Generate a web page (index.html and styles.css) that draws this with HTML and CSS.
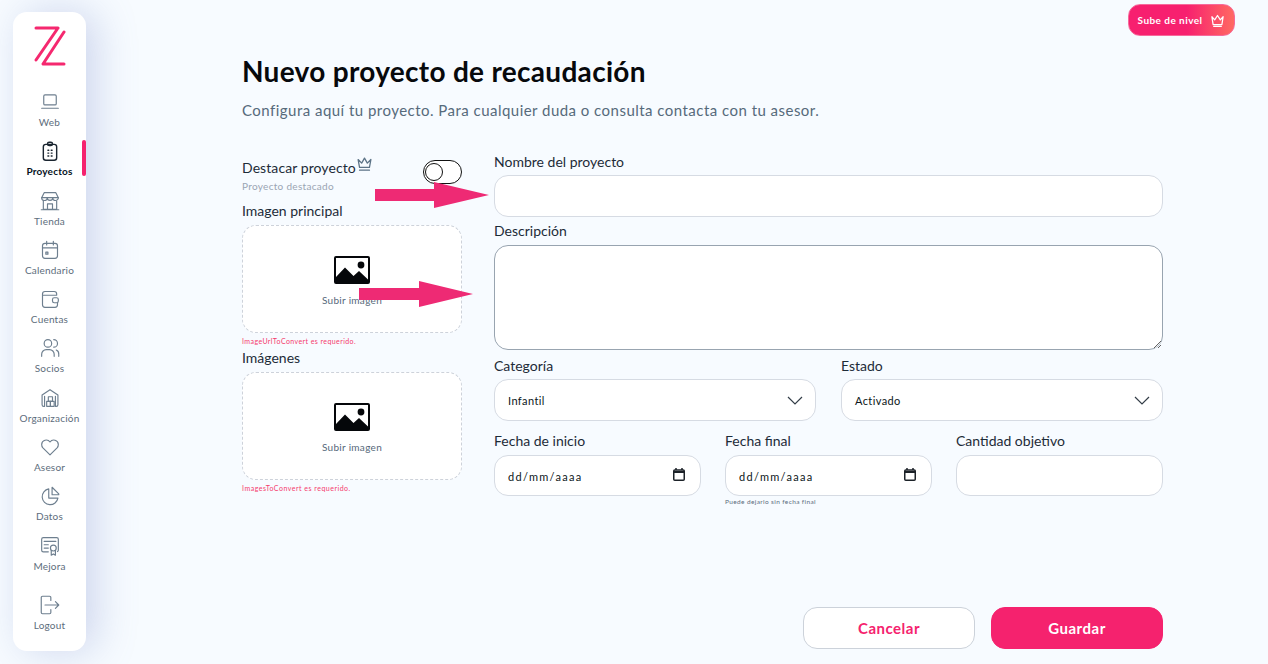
FILE: index.html
```html
<!DOCTYPE html>
<html lang="es">
<head>
<meta charset="utf-8">
<title>Nuevo proyecto de recaudación</title>
<link rel="stylesheet" href="styles.css">
</head>
<body>
<div class="page">
  <aside class="sidebar">
    <svg class="logo" viewBox="0 0 32 42" fill="none" stroke="#f5286f" stroke-width="3" stroke-linecap="round" stroke-linejoin="round"><path d="M2 2H24M24 2 2 34M30 6 9 38H30"/></svg>
    <nav class="nav">
      <a class="nav-item"><svg viewBox="0 0 24 24" class="ico"><rect x="4.5" y="3.5" width="15" height="12" rx="1.5"/><path d="M2 19.5H22"/></svg><span>Web</span></a>
      <a class="nav-item active"><svg viewBox="0 0 24 24" class="ico"><rect x="4" y="4" width="16" height="19" rx="3"/><rect x="9" y="1.5" width="6" height="4" rx="2"/><path d="M9.500 11h1M13.500 11h1M9.500 14.500h1M13.500 14.500h1M9.500 18h1M13.500 18h1"/></svg><span>Proyectos</span></a>
      <a class="nav-item"><svg viewBox="0 0 24 24" class="ico"><path d="M5 2h14l3 6H2z"/><path d="M2 8a3.300 3.300 0 0 0 6.700 0 3.300 3.300 0 0 0 6.600 0A3.300 3.300 0 0 0 22 8"/><path d="M4 12V22H20V12M9 22V15.500H15V22M1.500 22.500H22.500"/></svg><span>Tienda</span></a>
      <a class="nav-item"><svg viewBox="0 0 24 24" class="ico"><rect x="3" y="4" width="18" height="18" rx="3"/><path d="M3 9.500H21M8 1.500V6M16 1.500V6M7 14.500h2.500v2.500H7z"/></svg><span>Calendario</span></a>
      <a class="nav-item"><svg viewBox="0 0 24 24" class="ico"><path d="M20 7V6a3 3 0 0 0-3-3H6A3 3 0 0 0 3 6v13a3 3 0 0 0 3 3h12a3 3 0 0 0 3-3v-2M3 7.500H20"/><rect x="15" y="10.500" width="7" height="6" rx="2"/></svg><span>Cuentas</span></a>
      <a class="nav-item"><svg viewBox="0 0 24 24" class="ico"><circle cx="9.500" cy="6.500" r="4.500"/><path d="M16.500 2a4.500 4.500 0 0 1 0 9M2 22v-2.500A5.500 5.500 0 0 1 7.500 14h4a5.500 5.500 0 0 1 5.500 5.500V22M19.500 14.500a5 5 0 0 1 3 5V22"/></svg><span>Socios</span></a>
      <a class="nav-item"><svg viewBox="0 0 24 24" class="ico"><path d="M5.500 22H4.500a2 2 0 0 1-2-2V8.500L12 2l9.500 6.500V20a2 2 0 0 1-2 2h-1M5.500 22V10M18.500 10V22"/><rect x="8" y="16" width="4.500" height="6"/><rect x="12.500" y="16" width="4.500" height="6"/><rect x="10" y="10.500" width="5" height="5.500"/></svg><span>Organización</span></a>
      <a class="nav-item"><svg viewBox="0 0 24 24" class="ico"><path d="M12 21.500 3.500 13A5.800 5.800 0 0 1 2 9a5.500 5.500 0 0 1 10-3 5.500 5.500 0 0 1 10 3 5.800 5.800 0 0 1-1.500 4z"/></svg><span>Asesor</span></a>
      <a class="nav-item"><svg viewBox="0 0 24 24" class="ico"><path d="M10.500 3.500A9.500 9.500 0 1 0 21.500 14.500H10.500z"/><path d="M14.500 1.500 22.500 9.500V10.500H14.500z"/></svg><span>Datos</span></a>
      <a class="nav-item"><svg viewBox="0 0 24 24" class="ico"><path d="M10 19H4a2 2 0 0 1-2-2V4a2 2 0 0 1 2-2h16a2 2 0 0 1 2 2v13a2 2 0 0 1-1 1.700"/><path d="M5 6.500H19M5 10.500h5M5 14.500h5"/><circle cx="16" cy="14.500" r="3.500"/><path d="M13.500 17.500V23l2.500-1.500 2.500 1.500V17.500"/></svg><span>Mejora</span></a>
      <a class="nav-item logout"><svg viewBox="0 0 24 24" class="ico"><path d="M13 6.500V3a1.500 1.500 0 0 0-1.500-1.500H3A1.500 1.500 0 0 0 1.500 3v18A1.500 1.500 0 0 0 3 22.500h8.500A1.500 1.500 0 0 0 13 21v-3.500M6 12H22.500M18.500 8l4 4-4 4"/></svg><span>Logout</span></a>
    </nav>
    <span class="active-bar"></span>
  </aside>

  <main class="main">
    <div class="topbar">
      <button class="upgrade">Sube de nivel
        <svg viewBox="0 0 24 24" class="crown-white"><path d="M3 6l4.500 5L12 4l4.500 7L21 6l-2 12.500H5zM6 21.500h12"/></svg>
      </button>
    </div>
    <h1 class="title">Nuevo proyecto de recaudación</h1>
    <p class="subtitle">Configura aquí tu proyecto. Para cualquier duda o consulta contacta con tu asesor.</p>

    <div class="form">
      <section class="left">
        <div class="feature-row">
          <div class="feature-text">
            <div class="feature-label">Destacar proyecto<svg viewBox="0 0 24 24" class="crown"><path d="M3 5l5 5 4-7 4 7 5-5-2 11H5zM5 20h14"/></svg></div>
            <div class="feature-sub">Proyecto destacado</div>
          </div>
          <span class="toggle"><span class="knob"></span></span>
        </div>
        <label class="label label-img">Imagen principal</label>
        <div class="drop">
          <svg viewBox="0 0 36 28" class="img-ico"><path fill-rule="evenodd" d="M2 0H34a2 2 0 0 1 2 2V26a2 2 0 0 1-2 2H2a2 2 0 0 1-2-2V2A2 2 0 0 1 2 0zM2 2V21L11 11.500 19.500 20 25 15l9 8.500V2z"/><circle cx="27" cy="9" r="3.400"/></svg>
          <span class="drop-text">Subir imagen</span>
        </div>
        <div class="err">ImageUrlToConvert es requerido.</div>
        <label class="label label-img2">Imágenes</label>
        <div class="drop">
          <svg viewBox="0 0 36 28" class="img-ico"><path fill-rule="evenodd" d="M2 0H34a2 2 0 0 1 2 2V26a2 2 0 0 1-2 2H2a2 2 0 0 1-2-2V2A2 2 0 0 1 2 0zM2 2V21L11 11.500 19.500 20 25 15l9 8.500V2z"/><circle cx="27" cy="9" r="3.400"/></svg>
          <span class="drop-text">Subir imagen</span>
        </div>
        <div class="err err-two">ImagesToConvert es requerido.</div>
      </section>

      <section class="right">
        <label class="label">Nombre del proyecto</label>
        <input class="field" type="text">
        <label class="label label-desc">Descripción</label>
        <textarea class="area"></textarea>
        <div class="cols2">
          <div>
            <label class="label">Categoría</label>
            <div class="field select"><span>Infantil</span><svg viewBox="0 0 16 9" class="chev"><path d="M1 1l7 7 7-7"/></svg></div>
          </div>
          <div>
            <label class="label">Estado</label>
            <div class="field select"><span>Activado</span><svg viewBox="0 0 16 9" class="chev"><path d="M1 1l7 7 7-7"/></svg></div>
          </div>
        </div>
        <div class="cols3">
          <div>
            <label class="label">Fecha de inicio</label>
            <div class="field date"><span class="date-text">dd/mm/aaaa</span><svg viewBox="0 0 12 13" class="cal"><path d="M3 0v2M9 0v2"/><rect x=".75" y="2" width="10.500" height="10.250" rx="1"/><path d="M.75 4H11.250" stroke-width="2"/></svg></div>
          </div>
          <div>
            <label class="label">Fecha final</label>
            <div class="field date"><span class="date-text">dd/mm/aaaa</span><svg viewBox="0 0 12 13" class="cal"><path d="M3 0v2M9 0v2"/><rect x=".75" y="2" width="10.500" height="10.250" rx="1"/><path d="M.75 4H11.250" stroke-width="2"/></svg></div>
            <div class="hint">Puede dejarlo sin fecha final</div>
          </div>
          <div>
            <label class="label">Cantidad objetivo</label>
            <input class="field" type="text">
          </div>
        </div>
      </section>
    </div>

    <div class="actions">
      <button class="btn btn-cancel">Cancelar</button>
      <button class="btn btn-save">Guardar</button>
    </div>
  </main>
</div>

<svg class="arrow arrow-one" viewBox="0 0 114 26"><path d="M0 7H59V0L114 13 59 26V19H0z"/></svg>
<svg class="arrow arrow-two" viewBox="0 0 114 26"><path d="M0 7H60V0L114 13 60 26V19H0z"/></svg>
</body>
</html>
```
FILE: styles.css
```css
* { box-sizing: border-box; }
html, body { margin: 0; height: 664px; overflow: hidden; }
body {
  background: #f7fbff;
  font-family: "Lato", "Open Sans", sans-serif;
  color: #1d2b38;
  position: relative;
}
.page { display: flex; height: 664px; }

/* sidebar */
.sidebar {
  position: relative;
  width: 73px;
  height: 639px;
  margin: 12px 0 0 13px;
  flex: none;
  background: #fff;
  border-radius: 14px;
  box-shadow: 10px 0 40px rgba(110, 130, 195, .3);
  display: flex;
  flex-direction: column;
  align-items: center;
}
.logo { width: 32px; height: 42px; margin-top: 14px; flex: none; }
.nav { display: flex; flex-direction: column; align-items: center; margin-top: 24px; width: 100%; }
.nav-item {
  height: 49.3px;
  display: flex;
  flex-direction: column;
  align-items: center;
  width: 100%;
  color: #5d6d7c;
  font-size: 10px;
  letter-spacing: .2px;
  line-height: 14px;
  text-align: center;
}
.nav-item span { margin-top: 3px; white-space: nowrap; }
.ico {
  width: 20px;
  height: 20px;
  fill: none;
  stroke: #6e7f8f;
  stroke-width: 1.400;
  stroke-linecap: round;
  stroke-linejoin: round;
  flex: none;
}
.nav-item.active { color: #06121e; font-weight: 700; }
.nav-item.active .ico { stroke: #1a2530; stroke-width: 1.700; }
.nav-item.logout { margin-top: 10.500px; }
.active-bar {
  position: absolute;
  right: 0;
  top: 128px;
  width: 4px;
  height: 36px;
  background: #f5226e;
  border-radius: 3px;
}

/* main */
.main {
  flex: 1;
  min-width: 0;
  display: flex;
  flex-direction: column;
  padding: 4px 105px 15px 156px;
}
.topbar { display: flex; justify-content: flex-end; margin-right: -72px; height: 32px; flex: none; }
.upgrade {
  width: 107px;
  height: 32px;
  border: 1px solid #f7699b;
  border-radius: 12px;
  background: linear-gradient(90deg, #f7206f 0%, #f7206f 55%, #ff6a62 100%);
  color: #fff;
  font: 700 10px "Lato", sans-serif;
  letter-spacing: .45px;
  display: flex;
  align-items: center;
  justify-content: center;
  gap: 8px;
  padding: 0;
}
.crown-white { width: 15px; height: 15px; fill: none; stroke: #fff; stroke-width: 2; stroke-linejoin: round; stroke-linecap: round; }
.title {
  margin: 16px 0 0;
  font-size: 28px;
  line-height: 38px;
  font-weight: 700;
  color: #07090c;
  letter-spacing: .3px;
}
.subtitle {
  margin: 10px 0 0;
  font-size: 15px;
  line-height: 20px;
  color: #566a7b;
  letter-spacing: .47px;
}

/* form */
.form { display: flex; gap: 32px; margin-top: 35px; }
.left { width: 220px; flex: none; }
.right { flex: 1; min-width: 0; }
.label {
  display: block;
  font-size: 14px;
  line-height: 18px;
  color: #1d2b38;
  letter-spacing: 0;
}
.feature-row { display: flex; justify-content: space-between; align-items: flex-start; height: 42px; }
.feature-text { padding-top: 4px; }
.feature-label { font-size: 14px; line-height: 18px; letter-spacing: .08px; display: flex; }
.crown { width: 17px; height: 17px; margin: -3px 0 0 0; fill: none; stroke: #5c7387; stroke-width: 1.800; stroke-linejoin: round; stroke-linecap: round; }
.feature-sub { font-size: 10px; line-height: 12px; margin-top: 3px; color: #9aa5b3; letter-spacing: .3px; }
.toggle {
  width: 39px;
  height: 24px;
  border: 1px solid #111;
  border-radius: 12px;
  background: #fff;
  padding: 2px 1px;
  display: block;
  flex: none;
  margin-top: 5px;
}
.knob { display: block; width: 18px; height: 18px; border-radius: 50%; border: 1px solid #111; background: #fff; }
.label-img { margin-top: 5px; }
.drop {
  height: 108px;
  margin-top: 5px;
  background: #fff;
  border: 1px dashed #cdd2da;
  border-radius: 14px;
  display: flex;
  flex-direction: column;
  align-items: center;
  padding-top: 30px;
}
.img-ico { width: 36px; height: 28px; fill: #05070a; flex: none; }
.drop-text { font-size: 10px; line-height: 12px; margin-top: 10px; color: #56687a; letter-spacing: .3px; }
.err { font-size: 7px; line-height: 9px; margin-top: 4px; color: #f53a6c; letter-spacing: .42px; }
.err-two { letter-spacing: .5px; }
.label-img2 { margin-top: 3px; }
.field {
  display: block;
  width: 100%;
  height: 42px;
  border: 1px solid #d6dbe3;
  border-radius: 14px;
  background: #fff;
  outline: none;
  font: 11px "Lato", sans-serif;
  color: #0c1620;
}
.right > .label:first-child { margin-top: -2px; }
.right > .field { margin-top: 4px; }
.label-desc { margin-top: 5px; }
.area {
  display: block;
  width: 100%;
  height: 105px;
  margin-top: 5px;
  border: 1px solid #98a4b0;
  border-radius: 14px;
  background: #fff;
  outline: none;
}
.cols2 { display: grid; grid-template-columns: 322px 322px; gap: 25px; margin-top: 7px; }
.cols2 .label { margin-bottom: 4px; }
.select, .date { display: flex; align-items: center; justify-content: space-between; }
.select { padding: 0 12px 0 13px; letter-spacing: .4px; }
.chev { width: 16px; height: 9px; fill: none; stroke: #333d47; stroke-width: 1.200; }
.cols3 { display: grid; grid-template-columns: 207px 207px 207px; gap: 24px; margin-top: 11px; }
.cols3 .label { margin-bottom: 5px; }
.date { height: 41px; padding: 0 15px 0 13px; letter-spacing: 1.300px; font-size: 11px; }
.date-text { margin-top: 2px; }
.cols3 .field { height: 41px; }
.cal { width: 12px; height: 13px; fill: none; stroke: #1c2228; stroke-width: 1.500; margin-top: -2px; }
.hint { font-size: 6.500px; line-height: 8px; margin-top: 2px; color: #5b6c7c; letter-spacing: .38px; }

/* actions */
.actions { margin-top: auto; display: flex; justify-content: flex-end; gap: 16px; }
.btn {
  width: 172px;
  height: 42px;
  border-radius: 14px;
  font: 700 15px "Lato", sans-serif;
  letter-spacing: .5px;
  padding: 0;
}
.btn-cancel { background: #fff; border: 1px solid #ccd2da; color: #f5226e; }
.btn-save { background: #f5226e; border: 1px solid #f5226e; color: #fff; }

/* annotation arrows drawn over the screenshot */
.arrow { position: absolute; width: 114px; height: 26px; fill: #ee2a74; }
.arrow-one { left: 375px; top: 182px; }
.arrow-two { left: 359px; top: 281px; }
```
